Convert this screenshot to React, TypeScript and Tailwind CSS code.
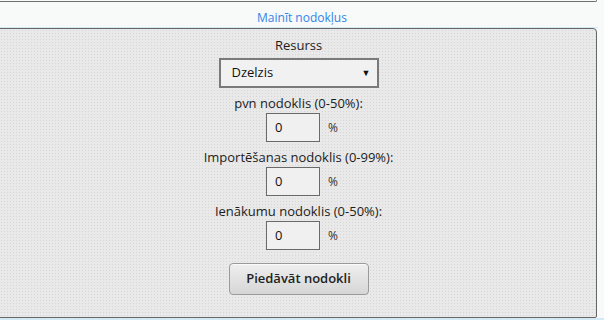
import React from "react";

const dots =
  "bg-[image:radial-gradient(#d6d6d6_0.8px,transparent_0.9px)] bg-[size:3px_3px]";

function PercentField({ label }: { label: string }) {
  return (
    <>
      <div className="h-[16px] leading-[16px] text-[13px] text-[#1c1c1c] mt-[7px]">{label}</div>
      <div className="flex items-center mt-[2px] ml-[7px]">
        <div className="w-[54px] h-[29px] border border-[#6a6a6a] bg-[#f0f0f0] pl-[8px] flex items-center text-[13px] text-[#111]">
          0
        </div>
        <span className="ml-[8px] text-[12px] text-[#333]">%</span>
      </div>
    </>
  );
}

export default function App() {
  return (
    <div
      className="w-[604px] h-[320px] overflow-hidden bg-[#f8f9f9] flex flex-col"
      style={{ fontFamily: "'Open Sans', 'Noto Sans', sans-serif" }}
    >
      <div className="w-[597px] h-[2px] border-b border-r border-[#6d7070] rounded-br-[3px] shrink-0" />
      <div className="h-[25px] flex items-center justify-center text-[12px] text-[#2f86e8] shrink-0 pt-[6px]">
        Mainīt nodokļus
      </div>
      <div className="h-[1px] bg-[#d3e9f3] w-[598px] shrink-0" />
      <div
        className={`-ml-[4px] w-[601px] h-[290px] border border-[#666] rounded-tr-[4px] rounded-br-[2px] bg-[#e9e9e9] ${dots} flex flex-col items-center pt-[8px] pl-[4px] shrink-0`}
      >
        <div className="h-[16px] leading-[16px] text-[13px] text-[#1c1c1c]">Resurss</div>
        <div className="mt-[5px] w-[160px] h-[30px] border-2 border-[#7a7a7a] bg-[#f1f1f1] flex items-center justify-between pl-[11px] pr-[6px] text-[13px] text-[#111]">
          <span>Dzelzis</span>
          <span className="text-[9px] text-[#111]">▼</span>
        </div>
        <PercentField label="pvn nodoklis (0-50%):" />
        <PercentField label="Importēšanas nodoklis (0-99%):" />
        <PercentField label="Ienākumu nodoklis (0-50%):" />
        <div className="mt-[13px] w-[140px] h-[32px] rounded-[4px] border border-[#9a9a9a] bg-gradient-to-b from-[#efefef] to-[#d6d6d6] flex items-center justify-center text-[13px] font-semibold text-[#222] shadow-[inset_0_1px_0_#fafafa]">
          Piedāvāt nodokli
        </div>
      </div>
      <div className="h-[3px] bg-[#d3e9f3] w-full shrink-0" />
    </div>
  );
}
